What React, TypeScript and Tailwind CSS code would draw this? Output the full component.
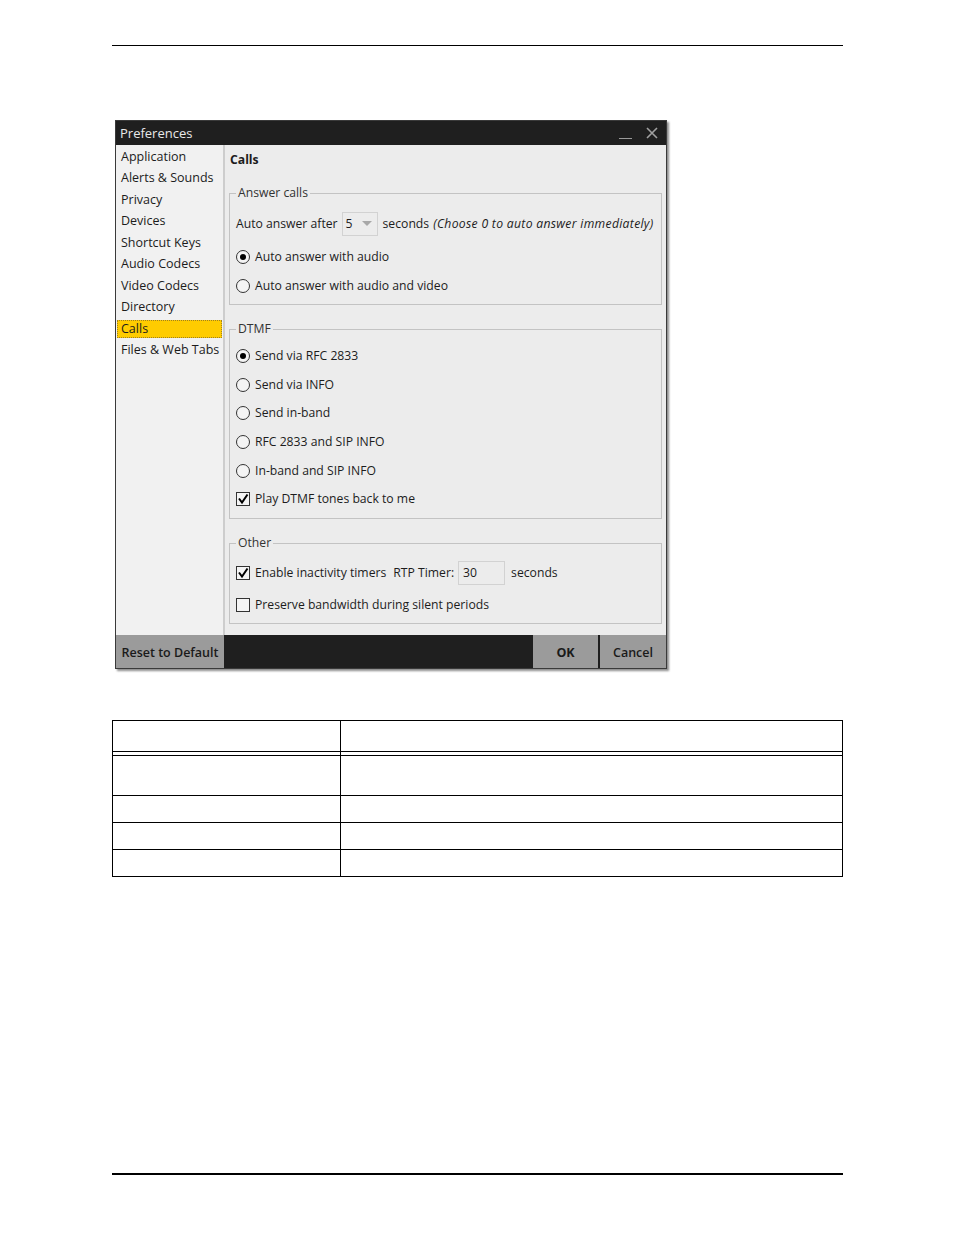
import React from 'react';

const font = "font-['Open_Sans','Noto_Sans',sans-serif]";

const Radio: React.FC<{ checked?: boolean }> = ({ checked }) => (
  <span className="w-[14px] h-[14px] rounded-full border border-[#333] bg-[#f4f4f4] flex items-center justify-center shrink-0">
    {checked && <span className="w-[6px] h-[6px] rounded-full bg-black" />}
  </span>
);

const Check: React.FC<{ checked?: boolean }> = ({ checked }) => (
  <span className="w-[14px] h-[14px] border border-[#333] bg-[#f4f4f4] flex items-center justify-center shrink-0">
    {checked && (
      <svg width="12" height="12" viewBox="0 0 12 12">
        <path d="M2 5.5 L5 9.5 L10.5 1.5" fill="none" stroke="#000" strokeWidth="2" />
      </svg>
    )}
  </span>
);

const Option: React.FC<{ kind: 'radio' | 'check'; checked?: boolean; label: string }> = ({ kind, checked, label }) => (
  <div className="h-[20px] flex items-center gap-[5px]">
    {kind === 'radio' ? <Radio checked={checked} /> : <Check checked={checked} />}
    <span>{label}</span>
  </div>
);

const navItems = [
  'Application',
  'Alerts & Sounds',
  'Privacy',
  'Devices',
  'Shortcut Keys',
  'Audio Codecs',
  'Video Codecs',
  'Directory',
  'Calls',
  'Files & Web Tabs',
];

const PreferencesWindow: React.FC = () => (
  <div className="ml-[115px] mt-[74px] w-[552px] h-[549px] border border-[#3a3a3a] flex flex-col shadow-[2px_2px_2px_rgba(0,0,0,0.45)]">
    {/* title bar */}
    <div className="h-[24px] bg-[#1f1f1f] flex items-center pl-[4px] pr-[8px] text-[13px] text-[#e8e8e8]">
      <span className="flex-1">Preferences</span>
      <span className="w-[13px] h-[1.5px] bg-[#9a9a9a] mt-[10px] mr-[14px]" />
      <svg width="12" height="12" viewBox="0 0 12 12">
        <path d="M1 1 L11 11 M11 1 L1 11" stroke="#a0a0a0" strokeWidth="1.6" />
      </svg>
    </div>

    {/* body */}
    <div className="h-[490px] flex text-[12.2px] text-[#1c1c1c]">
      <div className="w-[109px] bg-[#f1f1f1] border-r-2 border-[#cdcdcd] text-[12.5px] whitespace-nowrap pt-px">
        {navItems.map((item) => (
          <div key={item} className="h-[21.5px] py-[1.5px] px-px">
            <div
              className={
                item === 'Calls'
                  ? 'h-[18.5px] flex items-center px-[3px] bg-[#ffcc00] border border-dotted border-[#a08020]'
                  : 'h-[18.5px] flex items-center px-[4px]'
              }
            >
              {item}
            </div>
          </div>
        ))}
      </div>

      <div className="flex-1 bg-[#ececec] flex flex-col pt-[7px]">
        <div className="h-[16px] leading-[16px] pl-[5px] font-bold">Calls</div>

        <fieldset className="mt-[17px] mx-[4px] h-[120px] border border-[#c3c3c3] px-[6px]">
          <legend className="px-[2px] leading-[16px] text-[#333]">Answer calls</legend>
          <div className="mt-[11px] h-[24px] flex items-center">
            <span>Auto answer after</span>
            <div className="ml-[4px] w-[36px] h-[24px] border border-[#d2d2d2] bg-[#ececec] flex items-center pl-[3px]">
              <span className="flex-1">5</span>
              <svg width="10" height="6" viewBox="0 0 10 6" className="mr-[5px]">
                <path d="M0 0 L10 0 L5 5 Z" fill="#a8a8a8" />
              </svg>
            </div>
            <span className="ml-[5px]">seconds</span>
            <span className="ml-[4px] italic tracking-[0.3px]">(Choose 0 to auto answer immediately)</span>
          </div>
          <div className="mt-[11px]">
            <Option kind="radio" checked label="Auto answer with audio" />
          </div>
          <div className="mt-[9px]">
            <Option kind="radio" label="Auto answer with audio and video" />
          </div>
        </fieldset>

        <fieldset className="mt-[16px] mx-[4px] h-[198px] border border-[#c3c3c3] px-[6px]">
          <legend className="px-[2px] leading-[16px] text-[#333]">DTMF</legend>
          <div className="mt-[9px] flex flex-col gap-[8.6px]">
            <Option kind="radio" checked label="Send via RFC 2833" />
            <Option kind="radio" label="Send via INFO" />
            <Option kind="radio" label="Send in-band" />
            <Option kind="radio" label="RFC 2833 and SIP INFO" />
            <Option kind="radio" label="In-band and SIP INFO" />
            <Option kind="check" checked label="Play DTMF tones back to me" />
          </div>
        </fieldset>

        <fieldset className="mt-[16px] mx-[4px] h-[89px] border border-[#c3c3c3] px-[6px]">
          <legend className="px-[2px] leading-[16px] text-[#333]">Other</legend>
          <div className="mt-[10px] h-[24px] flex items-center">
            <Option kind="check" checked label="Enable inactivity timers" />
            <span className="ml-[7px]">RTP Timer:</span>
            <div className="ml-[4px] w-[47px] h-[24px] border border-[#d2d2d2] flex items-center pl-[4px]">30</div>
            <span className="ml-[6px]">seconds</span>
          </div>
          <div className="mt-[10px]">
            <Option kind="check" label="Preserve bandwidth during silent periods" />
          </div>
        </fieldset>
      </div>
    </div>

    {/* button bar */}
    <div className="h-[33px] bg-[#1f1f1f] flex text-[12.5px] text-[#1a1a1a] font-semibold">
      <div className="w-[108px] bg-[#9b9b9b] flex items-center justify-center pt-[4px]">Reset to Default</div>
      <div className="flex-1" />
      <div className="w-[65px] bg-[#9b9b9b] flex items-center justify-center pt-[4px] font-bold">OK</div>
      <div className="w-[2px]" />
      <div className="w-[66px] bg-[#9b9b9b] flex items-center justify-center pt-[4px]">Cancel</div>
    </div>
  </div>
);

const TableRow: React.FC<{ h: string; last?: boolean }> = ({ h, last }) => (
  <div className={`grid grid-cols-[228px_1fr] ${h} ${last ? '' : 'border-b border-black'}`}>
    <div className="border-r border-black" />
    <div />
  </div>
);

const App: React.FC = () => {
  return (
    <div className={`w-[954px] h-[1235px] bg-white flex flex-col ${font}`}>
      <div className="mt-[45px] ml-[112px] w-[731px] h-[1.3px] bg-black" />

      <PreferencesWindow />

      <div className="mt-[51px] ml-[112px] w-[731px] border border-black">
        <TableRow h="h-[31px]" />
        <TableRow h="h-[4px]" />
        <TableRow h="h-[40px]" />
        <TableRow h="h-[27px]" />
        <TableRow h="h-[27px]" />
        <TableRow h="h-[26px]" last />
      </div>

      <div className="mt-[296px] ml-[112px] w-[731px] h-[1.3px] bg-black" />
    </div>
  );
};

export default App;
